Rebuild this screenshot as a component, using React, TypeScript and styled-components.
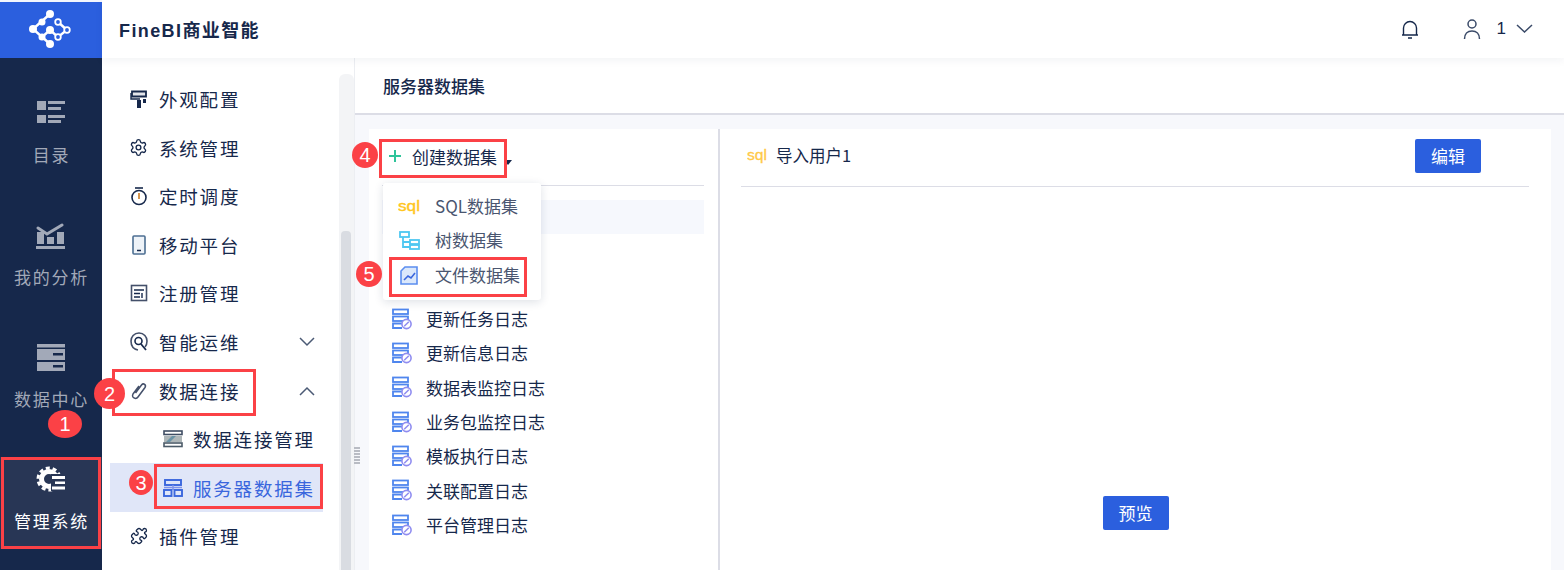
import React from 'react';
import styled, { createGlobalStyle } from 'styled-components';
import { Settings, Puzzle } from 'lucide-react';

const Global = createGlobalStyle`
  html, body { margin: 0; padding: 0; background: #fff; }
  * { box-sizing: border-box; }
  body { font-family: "Noto Sans CJK SC", "Liberation Sans", sans-serif; color: #16284b; }
`;

const Page = styled.div`
  position: relative; display: flex; width: 1564px; height: 570px; overflow: hidden;
`;
const Rail = styled.nav`
  width: 102px; flex: none; background: #16284b; display: flex; flex-direction: column;
`;
const Logo = styled.div`
  height: 58px; background: #2b5fde; border-top: 2px solid #f3f6fd; display: flex; align-items: center; justify-content: center;
`;
const RailList = styled.div`
  display: flex; flex-direction: column; gap: 30px; padding-top: 33px;
`;
const RailItem = styled.div<{ $active?: boolean }>`
  height: 92px; padding-top: 9px; display: flex; flex-direction: column; align-items: center;
  background: ${p => (p.$active ? '#283655' : 'transparent')};
  color: ${p => (p.$active ? '#ffffff' : '#a2a9b8')};
`;
const RailIcon = styled.svg`
  width: 30px; height: 27px; display: block;
`;
const RailLabel = styled.div`
  margin-top: 16px; font-size: 17px; line-height: 24px; letter-spacing: 1.8px; white-space: nowrap; margin-right: -1px;
`;
const Column = styled.div`
  flex: 1; min-width: 0; display: flex; flex-direction: column;
`;
const Header = styled.header`
  position: relative; z-index: 2; height: 58px; flex: none; background: #fff; display: flex; align-items: center;
  padding: 0 31px 0 17px; box-shadow: 0 3px 8px rgba(22, 40, 75, 0.05);
`;
const Brand = styled.div`
  font-family: "Liberation Sans", "Noto Sans CJK SC", sans-serif; font-size: 18px; font-weight: 700; letter-spacing: 1.4px; flex: 1;
`;
const HeaderTools = styled.div`
  display: flex; align-items: center; color: #16284b;
`;
const UserName = styled.span`
  font-family: "Liberation Sans", sans-serif; font-size: 17px; margin: 0 10px 0 16px;
`;
const Body = styled.div`
  flex: 1; min-height: 0; display: flex;
`;
const Side = styled.aside`
  width: 237px; flex: none; padding: 17px 16px 0 8px; background: #fff;
`;
const SideRow = styled.div<{ $active?: boolean; $sub?: boolean }>`
  height: 48.55px; display: flex; align-items: center; gap: ${p => (p.$sub ? 10 : 11)}px;
  padding-left: ${p => (p.$sub ? 53 : 20)}px; padding-right: 6px;
  font-size: 18.5px; letter-spacing: 1.8px; white-space: nowrap;
  color: ${p => (p.$active ? '#3a66dd' : '#16284b')};
  background: ${p => (p.$active ? '#e0e6f8' : 'transparent')};
`;
const SideText = styled.span`
  flex: 1;
`;
const ScrollTrack = styled.div`
  width: 15px; flex: none; margin-top: 16px; padding: 157px 3px 0 2px; background: #f3f4f6; border-radius: 6px 6px 0 0;
`;
const ScrollThumb = styled.div`
  height: 100%; background: #d9dce2; border-radius: 4px 4px 0 0;
`;
const Main = styled.main`
  position: relative; flex: 1; min-width: 0; display: flex; flex-direction: column; background: #f7f8fc; border-left: 1px solid #eceef2;
`;
const TitleBar = styled.div`
  height: 57px; flex: none; background: #fff; border-bottom: 2px solid #dcdde6; padding: 15px 0 0 28px;
  font-size: 17px; line-height: 26px; font-weight: 500;
`;
const Split = styled.div`
  flex: 1; min-height: 0; display: flex; padding: 14px 13px 0 14px;
`;
const LeftPanel = styled.section`
  position: relative; width: 349px; flex: none; background: #fff; padding: 0 14px 0 13px;
`;
const Grip = styled.div`
  position: absolute; left: -1px; top: 389px; width: 6px; height: 17px;
  background: repeating-linear-gradient(to bottom, #b9bcc4 0 2px, transparent 2px 3px);
`;
const CreateRow = styled.div`
  height: 57px; border-bottom: 1px solid #dcdde6; display: flex; align-items: center; padding: 0 0 2px 6px;
  font-size: 17px;
`;
const CreateText = styled.span`
  margin-left: 10px;
`;
const Caret = styled.span`
  margin: 13px 0 0 7px; width: 0; height: 0; border: 4.500px solid transparent; border-top: 5px solid #16284b; border-bottom: 0;
`;
const LogList = styled.div`
  padding-top: 14px;
`;
const LogRow = styled.div<{ $active?: boolean }>`
  height: 34.33px; display: flex; align-items: center; gap: 14px; padding: 0 0 3px 10px; font-size: 17px; white-space: nowrap;
  background: ${p => (p.$active ? '#f6f8fd' : 'transparent')};
`;
const Menu = styled.div`
  position: absolute; left: 14px; top: 54px; width: 158px; height: 117px; padding-top: 5px; background: #fff; border-radius: 3px;
  box-shadow: 0 2px 10px rgba(22, 40, 75, 0.14);
`;
const MenuRow = styled.div`
  height: 34.5px; display: flex; align-items: center; gap: 14px; padding-left: 15px; font-size: 17px; color: #4a5670; white-space: nowrap;
`;
const MenuIcon = styled.svg`
  width: 23px; height: 22px; flex: none; margin-top: 3px;
`;
const RightPanel = styled.section`
  flex: 1; min-width: 0; background: #fff; border-left: 2px solid #dcdde6; display: flex; flex-direction: column; align-items: center; padding-bottom: 40px;
`;
const RightHead = styled.div`
  align-self: stretch; height: 58px; margin: 0 22px 0 21px; border-bottom: 1px solid #dcdde6; display: flex; align-items: center;
  padding: 0 48px 3px 6px; font-size: 17px;
`;
const RightName = styled.span`
  flex: 1; margin-left: 8px; font-size: 16.5px; margin-top: -3px;
`;
const PrimaryButton = styled.button`
  width: 66px; height: 34px; border: 0; border-radius: 2px; background: #2b5fde; color: #fff; padding: 0;
  font-family: inherit; font-size: 17px; line-height: 32px;
`;
const Spacer = styled.div`
  flex: 1;
`;
const Frame = styled.div<{ $x: number; $y: number; $w: number; $h: number }>`
  position: absolute; z-index: 5; left: ${p => p.$x}px; top: ${p => p.$y}px; width: ${p => p.$w}px; height: ${p => p.$h}px;
  border: 3px solid #fb4146; pointer-events: none;
`;
const Badge = styled.div<{ $x: number; $y: number; $w?: number; $h?: number }>`
  position: absolute; z-index: 6; left: ${p => p.$x}px; top: ${p => p.$y}px; width: ${p => p.$w ?? 28}px; height: ${p => p.$h ?? 28}px;
  border-radius: 50%; background: #fb4146; color: #fff; display: flex; align-items: center; justify-content: center;
  font-family: "Liberation Sans", sans-serif; font-size: 20px; line-height: 1;
`;

const LogIcon = () => (
  <svg width="20" height="22" viewBox="0 0 20 22" style={{ flex: 'none' }}>
    <g fill="none" stroke="#4f86ee" strokeWidth="1.8">
      <rect x="1" y="1.5" width="15" height="4.5" />
      <rect x="1" y="8.5" width="15" height="4.5" />
      <path d="M10 15.5H1V20H10" />
    </g>
    <circle cx="14.5" cy="16" r="4.6" fill="#fff" stroke="#8f8cf0" strokeWidth="1.6" />
    <path d="M12.2 18.3l4.6-4.6" stroke="#8f8cf0" strokeWidth="1.5" />
  </svg>
);

const Chevron = ({ up }: { up?: boolean }) => (
  <svg width="16" height="10" viewBox="0 0 16 10" style={{ marginLeft: -2, marginRight: 2 }}>
    <path d={up ? 'M1 9l7-7 7 7' : 'M1 1l7 7 7-7'} fill="none" stroke="#4b5a75" strokeWidth="1.5" />
  </svg>
);

const ServerIcon = () => (
  <svg width="20" height="18" viewBox="0 0 20 18" style={{ flex: 'none' }}>
    <rect x="1" y="1" width="18" height="3.500" fill="none" stroke="#3f4d63" strokeWidth="1.600" />
    <path d="M1 6h18v6H1z" fill="#aeb6b8" />
    <rect x="1" y="13" width="18" height="3.500" fill="none" stroke="#4b5a68" strokeWidth="1.600" />
    <path d="M3 12l6-6h4l-6 6z" fill="#6b93a6" />
  </svg>
);

const TreeIcon = () => (
  <svg width="20" height="18" viewBox="0 0 20 18" style={{ flex: 'none' }}>
    <g fill="none" stroke="#3a66dd" strokeWidth="1.900">
      <rect x="2" y="1" width="16" height="5" />
      <path d="M10 6v5M1 8.500h18" stroke="#7f93ea" strokeWidth="1.400" />
      <rect x="1" y="11" width="7.500" height="6" />
      <rect x="11.500" y="11" width="7.500" height="6" />
    </g>
  </svg>
);

const stroke = '#16284b';
const side = [
  ['外观配置', <svg key="a" width="18" height="20" viewBox="0 0 18 20" style={{ flex: 'none' }}><path d="M2 2.500h14v5H2z" fill="#e3e5ea" stroke={stroke} strokeWidth="1.800" /><path d="M1 4v6h9" fill="none" stroke={stroke} strokeWidth="1.400" /><rect x="7" y="11" width="4" height="8" fill={stroke} /><rect x="13" y="10" width="3" height="4" fill={stroke} /></svg>],
  ['系统管理', <Settings key="b" size={19} color={stroke} strokeWidth={1.7} style={{ flex: 'none', marginLeft: -1, marginRight: 0 }} />],
  ['定时调度', <svg key="c" width="18" height="20" viewBox="0 0 18 20" style={{ flex: 'none' }}><circle cx="9" cy="11.500" r="7" fill="none" stroke={stroke} strokeWidth="1.600" /><path d="M5 2h8" stroke={stroke} strokeWidth="1.600" /><path d="M9 7v6" stroke="#d08a3c" strokeWidth="1.800" /></svg>],
  ['移动平台', <svg key="d" width="18" height="20" viewBox="0 0 18 20" style={{ flex: 'none' }}><rect x="3" y="1" width="12" height="18" rx="1" fill="#eef3f8" stroke="#4d6f92" strokeWidth="1.600" /><path d="M7 15.500h4" stroke={stroke} strokeWidth="1.500" /></svg>],
  ['注册管理', <svg key="e" width="18" height="20" viewBox="0 0 18 20" style={{ flex: 'none' }}><rect x="1.500" y="2.500" width="15" height="15" fill="none" stroke="#44506a" strokeWidth="1.600" /><path d="M4 7h10M4 10.500h6M4 14h6M12 10v5" stroke={stroke} strokeWidth="1.400" /></svg>],
  ['智能运维', <svg key="f" width="18" height="20" viewBox="0 0 18 20" style={{ flex: 'none' }}><path d="M8 18C3 17 1 13 1 9s3-8 8-8 8 4 8 8-1 5-2 6" fill="none" stroke="#44506a" strokeWidth="1.600" /><circle cx="8.500" cy="9" r="3.500" fill="none" stroke={stroke} strokeWidth="1.600" /><path d="M11 12l5 6" stroke={stroke} strokeWidth="1.800" /></svg>],
  ['数据连接', <svg key="g" width="18" height="20" viewBox="0 0 18 20" style={{ flex: 'none' }}><path d="M5.500 12l6-8c2-2.500 5 0 3.500 2.500L8 16c-2 3-7 .5-5-3l6-8" fill="none" stroke="#44506a" strokeWidth="1.500" /></svg>],
];

const logs = ['', '', '', '更新任务日志', '更新信息日志', '数据表监控日志', '业务包监控日志', '模板执行日志', '关联配置日志', '平台管理日志'];

export default function App() {
  return (
    <Page>
      <Global />
      <Rail>
        <Logo>
          <svg width="44" height="44" viewBox="0 0 44 44">
            <g fill="none" stroke="#fff" strokeWidth="2.400">
              <path d="M21 6L4 21l17 15" />
              <path d="M13 29l8-7 8 7 9-7-9-8" />
            </g>
            <circle cx="21" cy="6" r="4" fill="#fff" />
            <circle cx="13" cy="14" r="3.500" fill="#fff" />
            <circle cx="4" cy="21" r="4" fill="#fff" />
            <circle cx="21" cy="22" r="4" fill="#fff" />
            <circle cx="13" cy="29" r="3.500" fill="#fff" />
            <circle cx="21" cy="36" r="4" fill="#fff" />
            <g fill="#2b5fde" stroke="#fff" strokeWidth="1.800">
              <circle cx="29" cy="14" r="2.800" />
              <circle cx="38" cy="22" r="2.800" />
              <circle cx="29" cy="29" r="2.800" />
            </g>
          </svg>
        </Logo>
        <RailList>
          <RailItem>
            <RailIcon viewBox="0 0 30 27" fill="currentColor"><rect x="1" y="1" width="9" height="9" /><rect x="12" y="1" width="17" height="3" /><rect x="12" y="7" width="13" height="3" /><rect x="1" y="15" width="9" height="8" /><rect x="12" y="15" width="17" height="3" /><rect x="12" y="20" width="13" height="3" /></RailIcon>
            <RailLabel>目录</RailLabel>
          </RailItem>
          <RailItem>
            <RailIcon viewBox="0 0 30 27" fill="currentColor"><path d="M2 6l9 6 15-9" fill="none" stroke="currentColor" strokeWidth="3" strokeLinecap="round" /><rect x="1" y="10" width="7" height="12" /><rect x="11" y="15" width="7" height="7" /><rect x="21" y="10" width="7" height="12" /><rect x="0" y="24" width="29" height="3" /></RailIcon>
            <RailLabel>我的分析</RailLabel>
          </RailItem>
          <RailItem>
            <RailIcon viewBox="0 0 30 27" fill="currentColor"><rect x="1" y="0" width="28" height="3.500" /><path d="M1 5h28v11H1zM1 18h28v9H1z" /><rect x="17" y="9" width="10" height="2.500" fill="#16284b" /><rect x="17" y="21" width="10" height="2.500" fill="#16284b" /></RailIcon>
            <RailLabel>数据中心</RailLabel>
          </RailItem>
          <RailItem $active>
            <RailIcon viewBox="0 0 30 27">
              <circle cx="13" cy="13" r="7.500" fill="none" stroke="#fff" strokeWidth="5" />
              <circle cx="13" cy="13" r="11" fill="none" stroke="#fff" strokeWidth="3" strokeDasharray="4 2.900" />
              <rect x="15" y="8" width="15" height="17" fill="#283655" />
              <rect x="16" y="10" width="13" height="3" fill="#fff" />
              <rect x="19" y="15.500" width="10" height="2.500" fill="#fff" />
              <rect x="16" y="20.500" width="13" height="3" fill="#fff" />
            </RailIcon>
            <RailLabel>管理系统</RailLabel>
          </RailItem>
        </RailList>
      </Rail>
      <Column>
        <Header>
          <Brand>FineBI商业智能</Brand>
          <HeaderTools>
            <svg width="20" height="20" viewBox="0 0 20 20" style={{ marginRight: 43 }}><path d="M2 16h16M3.500 16V9a6.500 6.500 0 0 1 13 0v7M8 19h4" fill="none" stroke="#16284b" strokeWidth="1.400" /></svg>
            <svg width="18" height="20" viewBox="0 0 18 20"><circle cx="9" cy="5" r="4" fill="none" stroke="#3a4a68" strokeWidth="1.500" /><path d="M1.500 20c0-5 3-8 7.500-8s7.500 3 7.500 8" fill="none" stroke="#3a4a68" strokeWidth="1.500" /></svg>
            <UserName>1</UserName>
            <svg width="17" height="10" viewBox="0 0 17 10"><path d="M1 1l7.500 7L16 1" fill="none" stroke="#3a4a68" strokeWidth="1.500" /></svg>
          </HeaderTools>
        </Header>
        <Body>
          <Side>
            {side.map(([t, ic], i) => (
              <SideRow key={i}>
                {ic}
                <SideText>{t}</SideText>
                {i === 5 && <Chevron />}
                {i === 6 && <Chevron up />}
              </SideRow>
            ))}
            <SideRow $sub><ServerIcon /><span>数据连接管理</span></SideRow>
            <SideRow $sub $active><TreeIcon /><span>服务器数据集</span></SideRow>
            <SideRow>
              <Puzzle size={18} color={stroke} strokeWidth={1.7} style={{ flex: 'none' }} />
              <SideText>插件管理</SideText>
            </SideRow>
          </Side>
          <ScrollTrack><ScrollThumb /></ScrollTrack>
          <Main>
            <TitleBar>服务器数据集</TitleBar>
            <Split>
              <Grip />
              <LeftPanel>
                <CreateRow>
                  <svg width="14" height="14" viewBox="0 0 14 14" style={{ flex: 'none' }}><path d="M7 1v12M1 7h12" stroke="#2fc49a" strokeWidth="2" /></svg>
                  <CreateText>创建数据集</CreateText>
                  <Caret />
                </CreateRow>
                <LogList>
                  {logs.map((l, i) => (
                    <LogRow key={i} $active={i === 0}>
                      {l && <LogIcon />}
                      {l}
                    </LogRow>
                  ))}
                </LogList>
                <Menu>
                  <MenuRow>
                    <MenuIcon viewBox="0 0 23 22"><text x="0" y="15" fontFamily="Liberation Sans" fontSize="15" fill="#ffc61e" stroke="#ffc61e" strokeWidth=".4" textLength="22" lengthAdjust="spacingAndGlyphs">sql</text></MenuIcon>
                    SQL数据集
                  </MenuRow>
                  <MenuRow>
                    <MenuIcon viewBox="0 0 23 22"><g fill="none" stroke="#4ec7f1" strokeWidth="1.800"><rect x="2" y="2" width="9" height="5" /><rect x="12" y="10" width="9" height="4" /><rect x="12" y="15" width="9" height="4" /><path d="M5 7v10h7M5 12h7" /></g></MenuIcon>
                    树数据集
                  </MenuRow>
                  <MenuRow>
                    <MenuIcon viewBox="0 0 23 22"><path d="M7 2h12v17H3V6z" fill="#dbe8fb" stroke="#5b8def" strokeWidth="1.600" /><path d="M6 15l4-4 3 2 4-5" fill="none" stroke="#3a66dd" strokeWidth="1.600" /></MenuIcon>
                    文件数据集
                  </MenuRow>
                </Menu>
              </LeftPanel>
              <RightPanel>
                <RightHead>
                  <svg width="21" height="16" viewBox="0 0 21 16" style={{ flex: 'none' }}><text x="0" y="12" fontFamily="Liberation Sans" fontSize="14" fill="#ffc947" stroke="#ffc947" strokeWidth=".3" textLength="20" lengthAdjust="spacingAndGlyphs">sql</text></svg>
                  <RightName>导入用户1</RightName>
                  <PrimaryButton>编辑</PrimaryButton>
                </RightHead>
                <Spacer />
                <PrimaryButton>预览</PrimaryButton>
              </RightPanel>
            </Split>
          </Main>
        </Body>
      </Column>
      <Frame $x={1} $y={457} $w={100} $h={92} />
      <Frame $x={112} $y={369} $w={144} $h={47} />
      <Frame $x={154} $y={464} $w={169} $h={45} />
      <Frame $x={379} $y={139} $w={128} $h={39} />
      <Frame $x={389} $y={257} $w={138} $h={40} />
      <Badge $x={48} $y={410} $w={34} $h={28}>1</Badge>
      <Badge $x={94} $y={378} $w={31} $h={31}>2</Badge>
      <Badge $x={129} $y={470} $w={24} $h={25}>3</Badge>
      <Badge $x={352} $y={142} $w={26} $h={26}>4</Badge>
      <Badge $x={356} $y={261} $w={26} $h={26}>5</Badge>
    </Page>
  );
}
